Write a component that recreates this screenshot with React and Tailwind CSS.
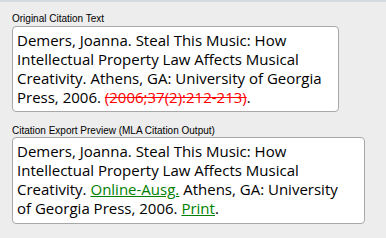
import React from 'react';

const App = () => {
  return (
    <div className="w-[386px] h-[238px] bg-[#ededed] border-t-2 border-[#d6dbe2] overflow-hidden" style={{ fontFamily: '"Open Sans", sans-serif' }}>
      <div className="flex flex-col pl-[12px] pt-[10px]">
        <div className="text-[10px] leading-[13px] text-black" style={{ fontFamily: '"Liberation Sans", Arial, sans-serif' }}>Original Citation Text</div>
        <div className="mt-[1px] w-[327px] h-[86px] bg-white border border-[#a8a8a8] rounded-[4px] pl-[4px] pr-[2px] pt-[4px] text-[15px] leading-[19px] text-black">
          Demers, Joanna. Steal This Music: How Intellectual Property Law Affects Musical Creativity. Athens, GA: University of Georgia Press, 2006.{' '}
          <span className="text-[#ff0000] line-through">(2006;37(2):212-213)</span>.
        </div>
        <div className="mt-[12px] text-[10px] leading-[13px] text-black" style={{ fontFamily: '"Liberation Sans", Arial, sans-serif' }}>Citation Export Preview (MLA Citation Output)</div>
        <div className="mt-[0px] w-[353px] h-[87px] bg-white border border-[#a8a8a8] rounded-[4px] pl-[4px] pr-[14px] pt-[4px] text-[15px] leading-[19px] text-black">
          Demers, Joanna. Steal This Music: How Intellectual Property Law Affects Musical Creativity.{' '}
          <span className="text-[#008000] underline">Online-Ausg.</span> Athens, GA: University of Georgia Press, 2006.{' '}
          <span className="text-[#008000] underline">Print</span>.
        </div>
      </div>
    </div>
  );
};

export default App;
